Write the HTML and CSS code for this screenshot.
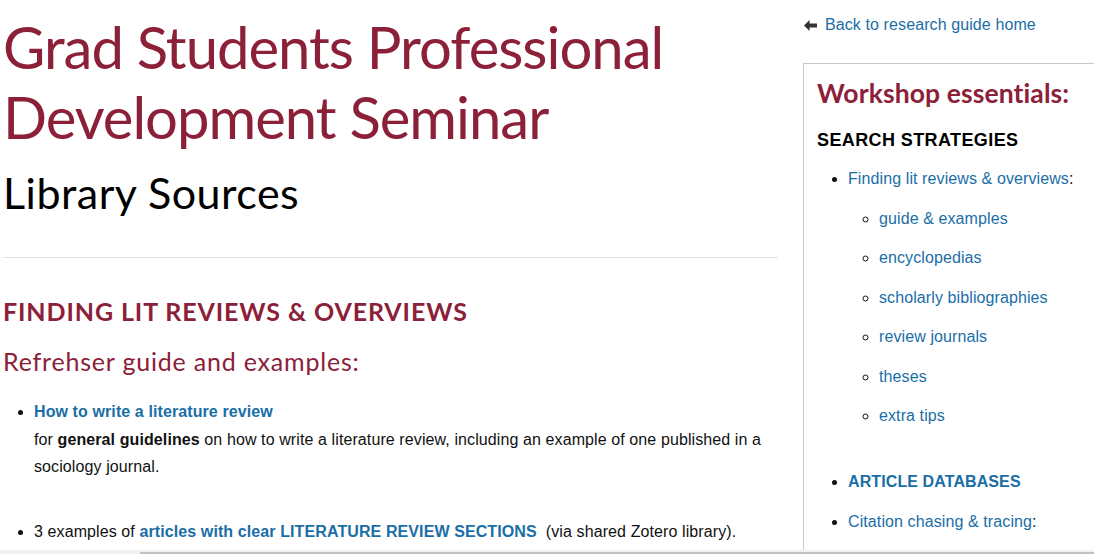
FILE: index.html
```html
<!DOCTYPE html>
<html lang="en">
<head>
<meta charset="utf-8">
<title>Grad Students Professional Development Seminar</title>
<link rel="stylesheet" href="styles.css">
</head>
<body>
<div class="page">
  <main class="main">
    <h1 class="title">Grad Students Professional Development Seminar</h1>
    <h2 class="subtitle">Library Sources</h2>
    <hr class="rule">
    <h3 class="section">FINDING LIT REVIEWS &amp; OVERVIEWS</h3>
    <h4 class="subsection">Refrehser guide and examples:</h4>
    <ul class="items">
      <li class="item">
        <a class="link strong" href="#">How to write a literature review</a><br>
        for <b>general guidelines</b> on how to write a literature review, including an example of one published in a sociology journal.
      </li>
      <li class="item">
        3 examples of <a class="link strong" href="#">articles with clear LITERATURE REVIEW SECTIONS</a>&nbsp; (via shared Zotero library).
      </li>
    </ul>
  </main>
  <aside class="side">
    <a class="back" href="#">
      <svg class="back-icon" viewBox="0 0 16 14" width="15" height="13" aria-hidden="true">
        <path d="M7 1 L1 7 L7 13 L7 9.2 L15 9.2 L15 4.8 L7 4.8 Z" fill="#333"/>
      </svg>
      <span>Back to research guide home</span>
    </a>
    <div class="box">
      <h3 class="box-title">Workshop essentials:</h3>
      <h4 class="box-head">SEARCH STRATEGIES</h4>
      <ul class="side-list">
        <li><a class="link" href="#">Finding lit reviews &amp; overviews</a>:
          <ul class="sub-list">
            <li><a class="link" href="#">guide &amp; examples</a></li>
            <li><a class="link" href="#">encyclopedias</a></li>
            <li><a class="link" href="#">scholarly bibliographies</a></li>
            <li><a class="link" href="#">review journals</a></li>
            <li><a class="link" href="#">theses</a></li>
            <li><a class="link" href="#">extra tips</a></li>
          </ul>
        </li>
        <li class="gap"><a class="link strong" href="#">ARTICLE DATABASES</a></li>
        <li><a class="link" href="#">Citation chasing &amp; tracing</a>:</li>
      </ul>
    </div>
  </aside>
</div>
<div class="hscroll"><div class="hscroll-thumb"></div></div>
</body>
</html>
```

FILE: styles.css
```css
html, body {
  margin: 0;
  padding: 0;
  background: #fff;
}
body {
  font-family: "Liberation Sans", Arial, sans-serif;
  font-size: 16px;
  letter-spacing: 0.1px;
  color: #111;
  overflow: hidden;
  height: 554px;
}
.page {
  display: flex;
  align-items: flex-start;
}
.main {
  width: 775px;
  margin-left: 3px;
  flex: none;
}
.title {
  font-family: Lato, "Open Sans", sans-serif;
  font-weight: 400;
  font-size: 58px;
  line-height: 70px;
  color: #8b2038;
  margin: 12px 0 0 0;
  letter-spacing: -1px;
}
.subtitle {
  font-family: Lato, "Open Sans", sans-serif;
  font-weight: 400;
  font-size: 43px;
  line-height: 52px;
  letter-spacing: 0.5px;
  color: #000;
  margin: 15px 0 0 0;
}
.rule {
  border: 0;
  border-top: 1px solid #e2e2e2;
  margin: 38px 0 0 0;
}
.section {
  font-family: Lato, "Open Sans", sans-serif;
  font-weight: 700;
  font-size: 25px;
  line-height: 30px;
  letter-spacing: 0.9px;
  color: #8b2038;
  margin: 38px 0 0 0;
}
.subsection {
  font-family: Lato, "Open Sans", sans-serif;
  font-weight: 400;
  font-size: 25px;
  line-height: 30px;
  letter-spacing: 0.8px;
  color: #8b2038;
  margin: 20px 0 0 0;
}
.items {
  margin: 22px 0 0 0;
  padding-left: 31px;
}
.item {
  line-height: 27.5px;
  margin-bottom: 37px;
}
.link {
  color: #1a6ea6;
  text-decoration: none;
}
.strong {
  font-weight: 700;
}
.side {
  margin-left: 25px;
  flex: none;
  width: 320px;
}
.back {
  display: flex;
  align-items: center;
  gap: 7px;
  margin-top: 15px;
  line-height: 20px;
  color: #1a6ea6;
  text-decoration: none;
}
.back-icon {
  flex: none;
}
.box {
  margin-top: 28px;
  border: 1px solid #c8c8c8;
  padding: 12px 13px 40px 13px;
}
.box-title {
  font-family: Lato, "Open Sans", sans-serif;
  font-weight: 700;
  font-size: 26.5px;
  line-height: 34px;
  color: #8b2038;
  margin: 0;
}
.box-head {
  font-size: 18px;
  font-weight: 700;
  letter-spacing: 0.4px;
  color: #000;
  line-height: 24px;
  margin: 18px 0 0 0;
}
.side-list {
  margin: 15px 0 0 0;
  padding-left: 31px;
}
.side-list li {
  line-height: 24px;
  margin-bottom: 15.5px;
}
.sub-list {
  list-style: circle;
  margin: 15.5px 0 0 0;
  padding-left: 31px;
}
.side-list .gap {
  margin-top: 42px;
}
.hscroll {
  position: fixed;
  left: 0;
  right: 0;
  bottom: 0;
  height: 4px;
  background: #f1f1f1;
}
.hscroll-thumb {
  position: absolute;
  left: 140px;
  right: 0;
  bottom: 0;
  height: 2px;
  background: #c1c1c1;
}
```
